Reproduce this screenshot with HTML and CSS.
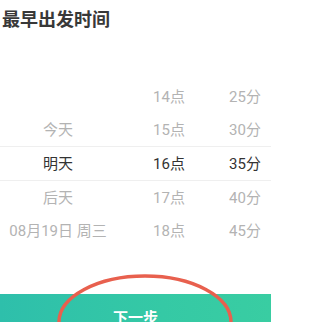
FILE: index.html
```html
<!DOCTYPE html>
<html lang="zh">
<head>
<meta charset="utf-8">
<link rel="stylesheet" href="styles.css">
</head>
<body>
<div class="page">
  <h1 class="title">最早出发时间</h1>
  <div class="picker">
    <div class="row">
      <span class="cell day"></span>
      <span class="cell hour">14点</span>
      <span class="cell min">25分</span>
    </div>
    <div class="row">
      <span class="cell day">今天</span>
      <span class="cell hour">15点</span>
      <span class="cell min">30分</span>
    </div>
    <div class="row selected">
      <span class="cell day">明天</span>
      <span class="cell hour">16点</span>
      <span class="cell min">35分</span>
    </div>
    <div class="row">
      <span class="cell day">后天</span>
      <span class="cell hour">17点</span>
      <span class="cell min">40分</span>
    </div>
    <div class="row">
      <span class="cell day">08月19日 周三</span>
      <span class="cell hour">18点</span>
      <span class="cell min">45分</span>
    </div>
  </div>
  <div class="footer">
    <button class="next">下一步</button>
    <svg class="circle" width="180" height="100" viewBox="0 0 180 100">
      <ellipse cx="90" cy="50" rx="86" ry="46" fill="none" stroke="#e8604e" stroke-width="3.5"/>
    </svg>
  </div>
</div>
</body>
</html>
```

FILE: styles.css
```css
html, body {
  margin: 0;
  padding: 0;
  background: #ffffff;
}
html {
  width: 271px;
  height: 322px;
  overflow: hidden;
}
body {
  width: 271px;
  height: 322px;
  overflow: hidden;
  font-family: Roboto, "Noto Sans CJK SC", sans-serif;
}
.page {
  display: flex;
  flex-direction: column;
  height: 322px;
  overflow: hidden;
}
.title {
  margin: 0;
  padding: 6px 0 0 2px;
  height: 24px;
  line-height: 24px;
  font-size: 18px;
  font-weight: 700;
  color: #383838;
  font-family: "Noto Sans CJK SC", sans-serif;
}
.picker {
  margin-top: 50px;
  display: flex;
  flex-direction: column;
}
.row {
  display: grid;
  grid-template-columns: 116px 106px 46px;
  height: 33px;
  align-items: center;
  font-size: 15px;
  color: #b3b3b3;
}
.row.selected {
  color: #333333;
  border-top: 1px solid #efefef;
  border-bottom: 1px solid #efefef;
}
.cell {
  text-align: center;
  line-height: 20px;
  white-space: nowrap;
}
.footer {
  position: relative;
  margin-top: 47px;
  flex: 1;
}
.next {
  display: block;
  width: 100%;
  height: 29px;
  border: 0;
  margin: 0;
  padding: 12px 0 0 0;
  box-sizing: border-box;
  overflow: visible;
  background: linear-gradient(90deg, #2ebfab 0%, #35c9a5 60%, #39cda2 100%);
  color: #ffffff;
  font-size: 15px;
  font-weight: 700;
  font-family: "Noto Sans CJK SC", sans-serif;
  line-height: 22px;
  text-align: center;
  vertical-align: top;
}
.circle {
  position: absolute;
  left: 55px;
  top: -22px;
}
```
